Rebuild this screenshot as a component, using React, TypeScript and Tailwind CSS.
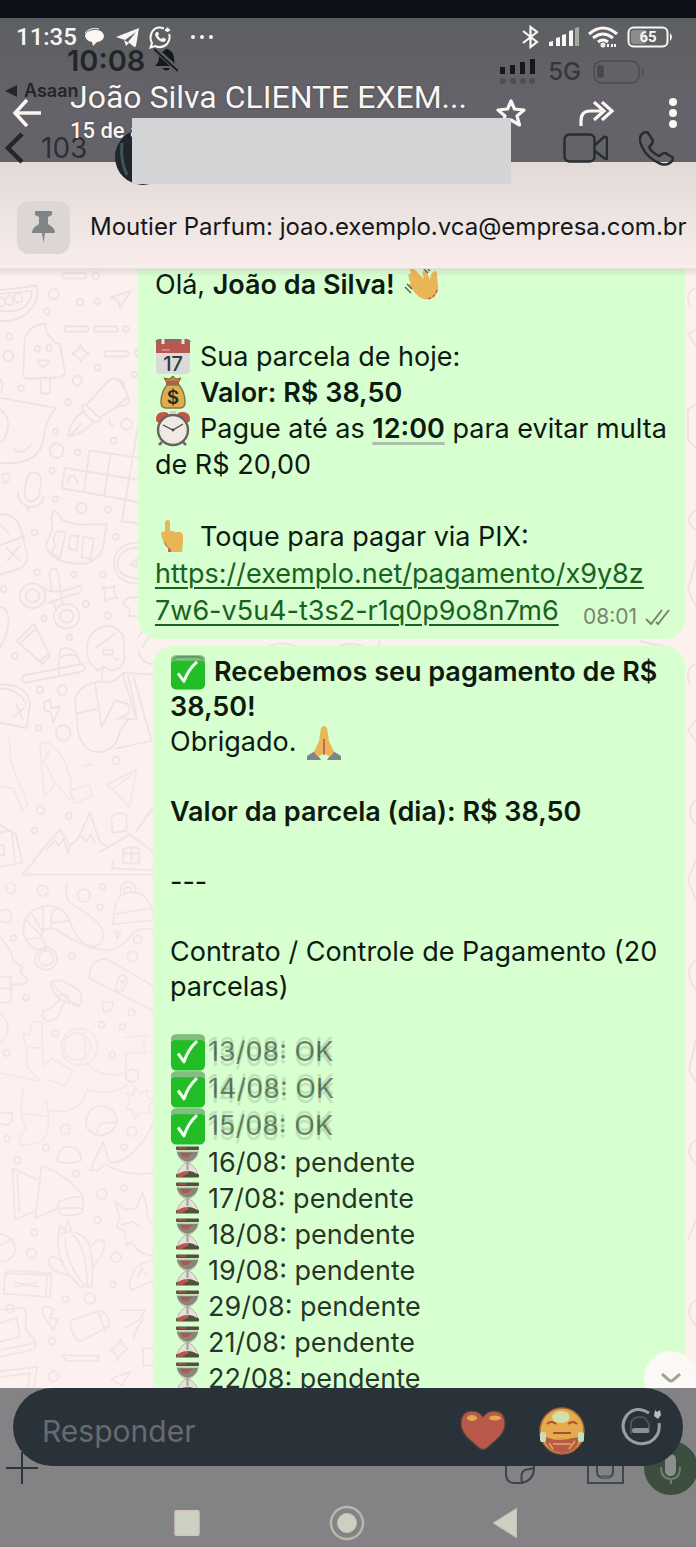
import type { ReactNode } from "react";

const circlesUpper: number[][] = [
  [161, 89, 15], [141, 134, 9], [240, 110, 10], [292, 108, 9], [28, 200, 9], [25, 250, 15],
  [378, 180, 9], [294, 281, 9], [232, 315, 14], [404, 299, 8], [63, 335, 9], [204, 371, 9],
  [380, 429, 16], [341, 472, 9], [167, 447, 8], [170, 498, 21], [233, 503, 9], [157, 550, 8],
  [167, 624, 8], [245, 648, 15], [324, 652, 9], [103, 712, 9], [347, 723, 9], [111, 816, 9],
  [222, 822, 8], [309, 821, 9], [11, 859, 9], [258, 898, 9], [323, 928, 10], [132, 936, 8],
  [209, 985, 8], [44, 1034, 9], [120, 1122, 10], [187, 1123, 14], [116, 1222, 8], [190, 1235, 22],
  [348, 1307, 11], [207, 1451, 9], [103, 1490, 8], [122, 1436, 12], [287, 41, 10],
];

const circlesLower: number[][] = [
  [32, 83, 15], [128, 91, 16], [252, 105, 19], [307, 79, 9], [300, 140, 9], [15, 166, 20],
  [41, 231, 8], [216, 283, 9], [398, 286, 15], [413, 235, 12], [78, 407, 9], [395, 451, 10],
  [305, 487, 9], [368, 494, 9], [166, 513, 9], [19, 571, 9], [337, 577, 9], [397, 638, 19],
  [196, 797, 15], [396, 803, 14], [22, 824, 9], [138, 851, 9], [372, 850, 9], [53, 888, 10],
  [229, 928, 9], [305, 988, 15], [373, 970, 9], [293, 1065, 10], [103, 1102, 9], [94, 1163, 14],
  [348, 1175, 15], [339, 1256, 9], [197, 1299, 9], [270, 1298, 16], [30, 1327, 12], [155, 1424, 10],
  [161, 1527, 15],
];

function Wallpaper() {
  return (
    <svg
      className="absolute inset-0 h-full w-full"
      viewBox="0 269 696 1119"
      preserveAspectRatio="xMinYMin slice"
      fill="none"
      stroke="#efe3e1"
      strokeWidth="5"
      strokeLinecap="round"
      strokeLinejoin="round"
      aria-hidden="true"
    >
      <g transform="translate(0 260) scale(.333 .383)">
        {circlesUpper.map(([x, y, r]) => (
          <ellipse key={`${x}-${y}`} cx={x} cy={y} rx={r} ry={r * 0.9} />
        ))}
        <path d="M0 78Q60 74 110 66Q120 110 80 140Q45 164 0 159M0 88Q50 86 96 80Q94 120 50 132Q20 136 0 131" />
        <circle cx="3" cy="110" r="12" /><circle cx="28" cy="106" r="12" /><circle cx="55" cy="99" r="12" />
        <path d="M332 98L394 80L360 125L354 104Z" />
        <rect x="187" y="34" width="72" height="14" rx="7" /><rect x="194" y="173" width="72" height="14" rx="7" />
        <rect x="282" y="173" width="72" height="14" rx="7" /><rect x="314" y="238" width="72" height="14" rx="7" />
        <path d="M70 300L74 205Q90 168 135 167L141 192L165 215L180 220L195 290Q197 304 178 306L85 310Q70 310 70 300ZM122 312V345Q135 354 150 345V310M114 262H148Q140 282 126 278Q118 274 114 262Z" />
        <circle cx="112" cy="232" r="8" /><circle cx="148" cy="230" r="8" />
        <path d="M216 245Q236 238 242 221Q248 240 268 244Q248 250 242 266Q236 250 216 245ZM415 230L402 243L415 255" />
        <path d="M258 380L325 315Q345 302 370 320L388 365Q388 385 358 380L302 410M248 380Q254 374 262 382L300 413Q300 425 282 422Q258 410 248 388ZM250 395Q210 420 204 460Q250 455 280 424M210 458L245 428M358 315L378 340M355 378L382 360M330 415Q324 430 340 434" />
        <path d="M0 360L168 386Q135 420 130 470Q120 530 20 531L0 529M0 390Q30 410 24 440Q15 475 0 475M42 494Q65 512 92 484M0 310L8 325L4 345" />
        <path d="M268 497L415 516M194 543L415 574M186 596L415 632M268 497L252 606M332 506L313 616M194 543L186 596M415 430L366 682L415 688M204 580Q202 563 222 562L234 583" />
        <path d="M78 580Q80 555 102 554Q127 556 122 586L118 612Q112 630 92 630Q70 626 74 604ZM53 604Q55 640 92 645Q125 645 131 618M84 644L86 656M5 560L25 556Q38 575 12 583Z" />
        <path d="M160 654Q175 656 185 678Q230 695 282 690L320 690L310 750Q290 795 235 793Q150 790 138 745L158 700Q150 675 160 654ZM170 708L198 711L180 778L155 765L166 745L160 730ZM212 720H235L230 760L206 752ZM250 722L282 729L272 780L245 776Z" />
        <path d="M0 664Q50 660 65 710L82 770Q84 800 50 808L0 822M0 745L72 722M0 690L28 715M20 752L60 785M58 748L22 785M415 738Q350 740 342 785Q338 840 415 846M415 750Q360 755 352 790Q352 828 415 832M390 795L410 780V802Z" />
        <ellipse cx="98" cy="877" rx="38" ry="32" /><ellipse cx="98" cy="877" rx="20" ry="17" />
        <ellipse cx="200" cy="930" rx="38" ry="32" /><ellipse cx="200" cy="930" rx="21" ry="17" />
        <path d="M148 815Q162 795 174 815L188 898M130 856Q160 878 240 850Q256 856 240 868L145 895M160 895L170 915M148 815L155 862" />
        <path d="M305 850Q325 864 345 850Q337 868 353 884Q333 878 315 892Q320 870 305 850ZM415 880L385 882Q370 892 370 900L390 910L388 930L415 930" />
        <path d="M50 995L102 950L150 1034L128 1055ZM60 1000L108 962M122 1045L148 1026M0 905Q30 910 25 950Q20 990 0 1010" />
        <path d="M70 1085L250 1054Q262 1068 245 1075L75 1104Q60 1098 70 1085ZM175 1065L180 1020Q190 1006 225 1022L240 1050M180 1040Q205 1022 236 1036M178 1084L176 1065" />
        <path d="M268 1050Q248 990 290 965Q335 940 370 980L374 1040Q370 1070 330 1072L310 1060L305 1100Q230 1110 225 1150L235 1235Q255 1290 300 1284Q350 1280 360 1230L385 1200M268 1050L292 1072L308 1062M290 1010Q320 995 345 975M310 1018H338V1030H310ZM345 1040L355 1045M305 1100Q340 1110 368 1080L410 1200L358 1196M285 1104L305 1220L345 1150L378 1158Q395 1160 385 1185L350 1200M230 1184L290 1172M400 1085L455 1255L350 1275M368 1078L460 1082M385 1085L412 1200" />
        <path d="M415 985Q430 960 460 960M416 1020Q425 1058 470 1055M430 1010Q440 980 470 985M0 1108Q85 1108 90 1160L80 1222L0 1208M0 1118Q60 1120 78 1160M38 1195L72 1170M50 1160L68 1200M132 1155L150 1148L154 1170L180 1165L160 1206L152 1180L134 1176Z" />
        <g opacity=".6">
          <path d="M28 1248L32 1310L55 1360L85 1420L68 1438L40 1380L0 1375M120 1260L132 1396Q150 1395 165 1365L210 1410Q225 1350 180 1290L145 1260ZM150 1280L132 1310L165 1365M210 1385L268 1370L276 1400L225 1418ZM320 1370L410 1330L388 1430L360 1400ZM255 1320L275 1318M340 1380L395 1345" />
        </g>
        <path d="M100 1568L180 1486L210 1530L235 1510L270 1444L300 1520L320 1530M140 1540L165 1515L175 1530L190 1512L205 1550L210 1530M245 1505L260 1518L272 1500L285 1520M300 1545L390 1500L460 1545M370 1568V1540Q395 1525 418 1540V1568M395 1535V1568M372 1550H416M335 1465L338 1495L380 1490V1450Q355 1435 335 1455M410 1490L460 1430M0 1475L48 1500L65 1568M0 1495L35 1490L45 1568M0 1528H12V1555H0" />
      </g>
      <g transform="translate(0 860) scale(.333 .338)" opacity=".8">
        {circlesLower.map(([x, y, r]) => (
          <circle key={`${x}-${y}`} cx={x} cy={y} r={r} />
        ))}
        <path d="M68 43H460M68 43L105 0M340 0L335 25L460 30M370 0V10H418V0M0 20L68 8L66 0" />
        <path d="M200 72Q195 120 215 130Q310 185 312 220Q305 265 260 252Q230 238 205 170Q180 130 130 137Q70 150 70 210Q80 265 130 268L140 260L125 230Q120 195 170 205Q260 270 330 266Q370 258 400 215Q420 198 460 205M95 160L128 210M130 138V205M205 180L155 186V205M75 175L120 220M78 235L125 230M155 186Q148 150 175 142" />
        <circle cx="138" cy="292" r="33" /><circle cx="138" cy="290" r="22" />
        <path d="M340 190Q340 130 362 105Q400 85 432 105Q455 130 460 160M340 160L460 143M338 190L460 178M362 100Q360 66 385 64Q410 68 408 98M372 98Q372 78 385 78Q396 78 396 96" />
        <path d="M268 350Q268 295 318 292L460 372M268 350L460 445M358 345Q370 335 380 350Q385 365 368 388Q350 392 346 375ZM362 360L372 356L362 378" />
        <path d="M152 360Q190 345 240 390Q252 420 235 434L210 424L180 412Q155 390 152 360ZM158 365Q185 405 235 430M180 410Q170 430 130 448Q120 465 140 475Q170 480 178 450L195 420M175 405Q200 380 208 425M306 418L340 422Q342 445 312 452Z" />
        <path d="M0 228Q35 260 38 295L68 318L60 330L84 355Q75 372 35 368L32 422H0M0 345H32V380H0M0 455Q28 470 22 510Q15 535 0 538M345 210L362 214L352 230Z" />
        <g opacity=".65">
          <path d="M68 510L90 518L95 480H126V530L130 600M68 510L80 560V610L120 655L0 630M80 556H130M132 610L155 585L218 625L195 668L145 650M260 600Q300 650 380 630M68 675L62 750L78 795Q50 830 60 842Q140 848 145 790V740L138 710M68 750L142 758M145 740Q240 760 262 680Q340 700 380 665M375 525L442 518L430 545L440 570L378 570V650M378 690L400 695L405 672L420 690L445 680L440 700L460 710L445 730L450 750L420 745L405 768L400 742L380 735L392 715Z" />
          <circle cx="238" cy="552" r="54" /><circle cx="232" cy="552" r="40" /><path d="M255 520V585" />
        </g>
        <path d="M258 780Q262 725 310 728Q350 735 350 775Q340 812 300 815Q262 810 258 780ZM350 775L300 780L290 812M170 890Q178 860 195 848L225 850Q250 875 242 890Q210 905 170 890ZM270 918L310 835L328 895Q400 900 460 780M270 918H295L315 900Q390 940 460 925M0 748H35Q42 775 20 785L0 780" />
        <path d="M38 912L112 945M38 912L45 1065L100 1040M52 930L58 1040M125 905L105 1060L175 1030M125 905Q200 930 250 995L248 1040Q240 1055 185 1050Q165 1035 178 1010Q230 990 250 1000M180 1030H248" />
        <path d="M345 1010L375 1035L410 1030L428 985Q442 1020 445 1060L460 1080M345 1010L360 1060L350 1085L375 1100L380 1140L395 1130Q420 1170 460 1170M365 1080L400 1070L420 1085" />
        <path d="M175 1110Q168 1170 205 1225L240 1262H275Q285 1190 265 1130Q240 1095 200 1100ZM195 1120Q200 1200 255 1260M220 1110Q260 1150 262 1260M175 1105L180 1080L195 1095L205 1065L215 1100M276 1140Q300 1110 314 1135Q315 1160 282 1200M190 1190Q150 1160 146 1185Q150 1220 208 1228" />
        <path d="M15 1222L155 1228L150 1293L12 1283ZM20 1214L155 1222M142 1230L138 1292M45 1250L110 1262M45 1262L110 1250M0 1105Q50 1120 45 1160Q30 1190 0 1187M0 1140L40 1120M388 1260Q395 1190 460 1185M388 1260L395 1272L460 1245M415 1235L425 1205L440 1230" />
        <path d="M126 1330Q140 1312 160 1330L150 1355L174 1358L160 1390L128 1345ZM212 1362L295 1335Q325 1330 328 1380L240 1424Q225 1420 212 1380ZM295 1338Q305 1370 318 1395M0 1330L70 1325Q85 1345 75 1385L104 1420Q112 1445 95 1450L0 1470M0 1450L100 1430M0 1370L50 1355L60 1410L0 1425M365 1332H435L420 1360L375 1385M400 1415L412 1385L430 1360" />
        <path d="M188 1468Q195 1462 205 1466L295 1466V1482H200ZM332 1448Q355 1440 362 1416Q366 1440 384 1446Q362 1458 352 1482Q350 1458 332 1448ZM0 1512L112 1500L100 1568M0 1530L90 1518L80 1568M332 1535L390 1515L365 1555ZM425 1445H460M430 1450V1495H460" />
      </g>
      <path d="M696 288Q684 292 690 306M696 330L688 334L696 346M696 404L688 410V440L696 448M696 510Q682 520 696 530M696 560L688 590L696 606M696 664Q684 668 690 684M696 720L688 730L696 742M696 800Q684 812 696 824M696 860L688 880L696 900M696 960Q682 970 696 990M696 1040L689 1070L696 1082M696 1140Q682 1150 696 1164M696 1220L688 1240M696 1300Q682 1310 696 1326M340 646Q350 642 362 646M270 646Q280 641 296 646M380 641L378 648M640 641Q652 645 664 646" strokeWidth="2" />
    </svg>
  );
}

function Wave() {
  return (
    <svg className="size-9 shrink-0" viewBox="0 0 36 36" aria-hidden="true">
      <path d="M5 11Q3 7 7 6L6 3Q9 0 12 4L20 12L18 5Q22 2 24 8L26 13Q26 6 31 4Q34 5 33 10L34 19Q35 26 29 31Q20 35 13 28L6 20Q4 17 7 16L5 13Z" fill="#e8b656" />
      <path d="M33 23Q31 30 24 32" stroke="#c1584a" strokeWidth="1.4" fill="none" strokeDasharray="3 2" />
      <path d="M18 0L24 6M22 0L26 4M1 20L7 26M3 17L8 22" stroke="#4e5b47" strokeWidth="1.4" />
    </svg>
  );
}

function CalendarEmoji() {
  return (
    <svg className="size-9 shrink-0" viewBox="0 0 36 36" aria-hidden="true">
      <path d="M1 4Q1 1 4 1H32Q35 1 35 4V31Q35 35 31 35H5Q1 35 1 31Z" fill="#dcd9d9" />
      <path d="M1 4Q1 1 4 1H32Q35 1 35 4V14H1Z" fill="#b9584d" />
      <path d="M1 3Q2 1 4 1H32Q34 1 35 3" stroke="#77726b" strokeWidth="2" fill="none" />
      <path d="M8 0V5M28 0V5" stroke="#e9e5df" strokeWidth="3" />
      <path d="M7 11H15" stroke="#df9a8f" strokeWidth="1.5" />
      <text x="18" y="32" textAnchor="middle" fontFamily="Inter, sans-serif" fontWeight="500" fontSize="20" fill="#2e3a44">17</text>
    </svg>
  );
}

function MoneyBag() {
  return (
    <svg className="size-9 shrink-0" viewBox="0 0 36 36" aria-hidden="true">
      <path d="M12 8L9 3L14 4L18 1L21 4L26 3L23 8Z" fill="#b08a44" stroke="#7d6237" />
      <path d="M11 6H24V10H11Z" fill="#b9584d" />
      <path d="M12 10H24Q30 17 30 27Q30 33 25 33H11Q6 33 6 27Q6 17 12 10Z" fill="#e0ac4e" stroke="#82784a" strokeWidth="1.5" />
      <text x="18" y="29" textAnchor="middle" fontFamily="Inter, sans-serif" fontWeight="600" fontSize="19" fill="#20301f">$</text>
    </svg>
  );
}

function AlarmClock() {
  return (
    <svg className="size-9 shrink-0" viewBox="0 0 36 36" aria-hidden="true">
      <path d="M7 31L4 34M28 31L31 34" stroke="#6d675f" strokeWidth="2.5" />
      <path d="M1 10Q0 1 9 1Q13 1 14 4L4 12ZM35 10Q36 1 27 1Q23 1 22 4L32 12Z" fill="#c0554a" />
      <path d="M15 2Q18 -1 21 2" stroke="#cfcac4" strokeWidth="2" fill="none" />
      <circle cx="18" cy="19" r="15" fill="#f1e9e4" stroke="#68625e" strokeWidth="2.4" />
      <circle cx="18" cy="19" r="12" fill="none" stroke="#d8cfca" strokeWidth="1" strokeDasharray="1 5" />
      <path d="M8 14L18 19L28 13" stroke="#454541" strokeWidth="1.3" fill="none" />
      <circle cx="18" cy="19" r="1.4" fill="#454541" />
    </svg>
  );
}

function PointUp() {
  return (
    <svg className="size-9 shrink-0" viewBox="0 0 36 36" aria-hidden="true">
      <path d="M10 4Q10 1 13 1Q15 1 15 4V12H19V13L25 13Q28 14 28 17V23L27 33H13V29L9 25L6 15Q6 13 8 12L10 13Z" fill="#e8b656" />
      <path d="M10 22Q12 29 16 30V33H13V29Q9 26 10 22Z" fill="#c1704f" />
    </svg>
  );
}

function Pray() {
  return (
    <svg className="size-9 shrink-0" viewBox="0 0 36 36" aria-hidden="true">
      <path d="M1 31L9 26L15 35H1ZM35 31L27 26L21 35H35Z" fill="#7f8588" />
      <path d="M15 3Q18 -1 21 3L23 16L28 27L24 32L18 28L12 32L8 27L13 16Z" fill="#e8b656" />
      <path d="M18 14V30" stroke="#b9584d" strokeWidth="1.6" />
    </svg>
  );
}

function CheckBoxEmoji({ tall = false }: { tall?: boolean }) {
  return (
    <svg
      className={tall ? "h-[37px] w-[35px] shrink-0" : "h-[35px] w-[35px] shrink-0"}
      viewBox="0 0 35 36"
      preserveAspectRatio="none"
      aria-hidden="true"
    >
      <rect x="1" y="0.5" width="34" height="35" rx="5" fill="#22bd27" />
      <path d="M1 8V5Q1 .5 6 .5H30Q35 .5 35 5V8Q32 5 28 6H8Q4 5 1 8Z" fill="#84bd84" />
      {!tall && <path d="M3 5Q5 2 8 2H28Q32 2 33 5" stroke="#3f7d45" fill="none" />}
      <path d="M8 19L14 27Q18 15 27 7" stroke="#effff0" strokeWidth="3" fill="none" strokeLinejoin="round" />
    </svg>
  );
}

function Hourglass() {
  return (
    <svg className="h-9 w-[35px] shrink-0" viewBox="0 0 35 36" aria-hidden="true">
      <path d="M7 6H28Q27 15 18.500 18Q26 21 28 30H7Q9 21 16.500 18Q8 15 7 6Z" fill="#e6e0da" stroke="#a9a79b" strokeWidth=".8" />
      <path d="M7 7H28Q26 15 17.500 17Q9 15 7 7Z" fill="#85877a" />
      <path d="M10 8H22L18 12H13Z" fill="#b0564a" />
      <path d="M16.500 16H18.500V25H16.500Z" fill="#a5a295" />
      <path d="M7 30Q11 26 17.500 26V31H7Z" fill="#bd574b" />
      <path d="M17.500 26Q24 26 28 30V31H17.500Z" fill="#4f5640" />
      <rect x="6" y="1.500" width="23" height="3.500" rx="1" fill="#4f513d" />
      <path d="M8 2H16V4H8Z" fill="#a04d42" />
      <rect x="6" y="29" width="23" height="3.500" rx="1" fill="#4f513d" />
      <path d="M7 29H17L12 32H7Z" fill="#b5544a" />
    </svg>
  );
}

function Line({ children }: { children?: ReactNode }) {
  return <p className="flex h-9 items-center gap-[9px] whitespace-pre">{children}</p>;
}

function Line2({ children }: { children?: ReactNode }) {
  return <p className="flex h-[35px] items-center gap-[9px] whitespace-pre">{children}</p>;
}

const paid = ["13/08: OK", "14/08: OK", "15/08: OK"];
const pending = ["16/08", "17/08", "18/08", "19/08", "29/08", "21/08", "22/08"];

function ViewerHeader() {
  return (
    <header className="relative z-10 bg-linear-to-b from-[#5c5f61] to-[#65636a] to-60% pb-[15px]">
      <div className="absolute inset-0 font-['Inter',sans-serif] text-[#22262a]" aria-hidden="true">
        <div className="flex h-[84px] items-center justify-between pr-[51px] pl-[67px]">
          <span className="flex items-center gap-[9px] text-[29px] leading-none font-semibold">
            10:08
            <svg className="size-6" viewBox="0 0 24 24">
              <path d="M1 18Q5 15 5 9Q6 4 10 3Q12 -1 15 2Q20 4 20 11Q20 15 22 18Z" fill="#15191e" />
              <path d="M8 20H16Q13 25 8 20Z" fill="#15191e" />
              <path d="M1 1L24 22" stroke="#636367" strokeWidth="5" />
              <path d="M0 1L24 23" stroke="#15191e" strokeWidth="1.800" />
            </svg>
          </span>
          <span className="mt-6 flex items-center gap-[12px] text-[24px] leading-none font-medium text-[#34373b]">
            <svg className="h-[26px] w-[37px]" viewBox="0 0 37 26">
              <path d="M1 8H6V15H1ZM11 6H16V15H11ZM21 3H26V15H21ZM31 0H36V15H31Z" fill="#15191e" />
              <g fill="#505054"><circle cx="4" cy="22" r="3" /><circle cx="14" cy="22" r="3" /><circle cx="24" cy="22" r="3" /><circle cx="33" cy="22" r="3" /></g>
            </svg>
            5G
            <svg className="h-6 w-[52px]" viewBox="0 0 52 24">
              <rect x="1" y="1" width="45" height="22" rx="8" fill="none" stroke="#4a4c4c" strokeWidth="1.500" />
              <rect x="4" y="5" width="7" height="13" rx="3" fill="#45484f" />
              <path d="M49 8Q53 12 49 16Z" fill="#4a4c4c" />
            </svg>
          </span>
        </div>
        <div className="-mt-[21px] flex h-5 items-center gap-[7px] pl-[5px] text-[18px] leading-none font-semibold">
          <svg className="h-3 w-3" viewBox="0 0 12 12"><path d="M0 6L12 0V12Z" fill="#22262a" /></svg>
          Asaan
        </div>
        <div className="mt-7 flex h-[38px] items-center pr-[22px] pl-[5px] text-[28px] leading-none text-[#2c3032]">
          <svg className="h-8 w-5 shrink-0" viewBox="0 0 20 32"><path d="M17 2L3 16L17 30" stroke="#22282a" strokeWidth="4.500" fill="none" /></svg>
          <span className="ml-4">103</span>
          <svg className="ml-7 size-14 self-start" viewBox="0 0 56 56">
            <circle cx="28" cy="28" r="28" fill="#20262b" />
            <path d="M7 14Q5 32 12 46" stroke="#42535c" strokeWidth="3" fill="none" />
          </svg>
          <svg className="ml-auto h-[30px] w-[45px]" viewBox="0 0 45 30" fill="none" stroke="#282d2e" strokeWidth="2.500" strokeLinejoin="round">
            <rect x="1.500" y="1.500" width="30" height="27" rx="5" /><path d="M32 12L41 4Q44 3 44 6V25Q44 27 41 25L32 18" />
          </svg>
          <svg className="ml-[31px] size-[35px]" viewBox="0 0 35 35" fill="none" stroke="#282d2e" strokeWidth="2.500" strokeLinejoin="round">
            <path d="M4 2Q7 0 9 2L13 8Q15 11 12 14L10 16Q13 22 20 25L23 23Q26 21 28 23L33 26Q35 28 33 30Q29 35 22 33Q5 26 1 10Q0 5 4 2Z" />
          </svg>
        </div>
      </div>

      <div className="relative flex h-[38px] items-center pr-[23px] pl-4 text-[#fbf5f3]">
        <span className="text-[24px] leading-none font-medium">11:35</span>
        <svg className="ml-2 h-[19px] w-[19px]" viewBox="0 0 19 19" fill="#fbf5f3">
          <path d="M9 2Q18 1 19 8Q19 13 12 14L8 18L7 14Q1 13 0 8Q0 3 9 2Z" /><path d="M0 5Q5 -1 14 1" stroke="#fbf5f3" fill="none" />
        </svg>
        <svg className="ml-3 h-[19px] w-[23px]" viewBox="0 0 23 19" fill="#fbf5f3">
          <path d="M0 9L23 0L20 18Q19 20 17 18L12 14L20 4L9 12Z" /><path d="M8 12L10 18L13 15Z" />
        </svg>
        <svg className="ml-[10px] size-[23px]" viewBox="0 0 23 23" fill="none" stroke="#fbf5f3" strokeWidth="2">
          <path d="M15 2.500Q7 -.5 3 6Q0 12 3 17L1.500 21.500L6 20Q13 23 18 18Q22 13 20 8" />
          <path d="M7.500 6Q5 8 7 11Q10 16 15 16Q17 15 17 13L14 11.500L12.500 13Q10 12 9 9.500L10 8L9 6Z" fill="#fbf5f3" stroke="none" />
          <path d="M18.500 1.500V6M16 4H21" />
        </svg>
        <svg className="ml-[18px] h-1 w-6" viewBox="0 0 24 4" fill="#fbf5f3"><circle cx="3" cy="2" r="2" /><circle cx="12" cy="2" r="2" /><circle cx="21" cy="2" r="2" /></svg>
        <svg className="ml-auto h-6 w-[17px]" viewBox="0 0 17 24" fill="none" stroke="#fbf5f3" strokeWidth="2.200">
          <path d="M1 6L15 17L8.500 22V2L15 7L1 18" />
        </svg>
        <svg className="ml-[10px] h-5 w-[31px]" viewBox="0 0 31 20">
          <path d="M0 15L4 14V19H0ZM7 11L11 10V19H7ZM13 8L17 7V19H13ZM20 4L24 3V19H20Z" fill="#fbf5f3" /><path d="M26 1L30 0V19H26Z" fill="#a5aba0" />
        </svg>
        <svg className="ml-2 h-[22px] w-[30px]" viewBox="0 0 30 22" fill="none" stroke="#fbf5f3" strokeWidth="3">
          <path d="M1 8Q15 -4 29 8M5 12Q15 4 25 12M10 16Q15 12 20 16" /><circle cx="15" cy="19" r="1" /><path d="M20 18V21M24 18V21M27 18V21" strokeWidth="2" />
        </svg>
        <svg className="ml-[9px] h-[22px] w-[46px]" viewBox="0 0 46 22">
          <rect x="4" y="4" width="15" height="14" rx="2" fill="#8b8b8d" />
          <rect x="1.500" y="1.500" width="39" height="19" rx="5" fill="none" stroke="#fbf5f3" strokeWidth="2" />
          <path d="M43 7Q47 11 43 15Z" fill="#fbf5f3" />
          <text x="21" y="16" textAnchor="middle" fontFamily="Roboto, sans-serif" fontWeight="700" fontSize="15" fill="#fbf5f3">65</text>
        </svg>
      </div>

      <div className="relative mt-[23px] flex h-[68px] items-center pr-4 pl-3 text-[#fbf5f3]">
        <button type="button" aria-label="Voltar" className="shrink-0">
          <svg className="h-[30px] w-[30px]" viewBox="0 0 30 30" fill="none" stroke="#fbf5f3" strokeWidth="3.500"><path d="M15 2L3 15L15 28M2 15H29" /></svg>
        </button>
        <div className="ml-7 min-w-0 flex-1">
          <h1 className="h-9 whitespace-nowrap text-[32px] leading-9 [text-shadow:0_0_2px_#3a3a3e]">João Silva CLIENTE EXEM...</h1>
          <p className="h-8 text-[22px] leading-8 font-medium [text-shadow:0_0_2px_#3a3a3e]">15 de agosto</p>
        </div>
        <button type="button" aria-label="Favoritar" className="shrink-0">
          <svg className="h-[30px] w-8" viewBox="0 0 32 30" fill="none" stroke="#fbf5f3" strokeWidth="3.200" strokeLinejoin="round">
            <path d="M16 3L19.500 11L29 12L22 18L24.500 27L16 22L7.500 27L10 18L3 12L12.500 11Z" />
          </svg>
        </button>
        <button type="button" aria-label="Encaminhar" className="ml-[51px] shrink-0">
          <svg className="h-[25px] w-[37px]" viewBox="0 0 37 25" fill="none" stroke="#fbf5f3" strokeWidth="3.200">
            <path d="M3 25V20Q3 10 12 10H23M16 1L26 10L16 19M24 1L34 10L24 19" />
          </svg>
        </button>
        <button type="button" aria-label="Mais opções" className="ml-[51px] shrink-0">
          <svg className="h-[30px] w-[14px]" viewBox="0 0 14 30" fill="#fbf5f3"><circle cx="7" cy="4" r="4" /><circle cx="7" cy="15" r="4" /><circle cx="7" cy="26" r="4" /></svg>
        </button>
      </div>
      <div className="absolute top-[100px] right-[185px] left-[132px] h-[66px] bg-[#d2d4d5]" />
    </header>
  );
}

function Messages() {
  return (
    <main className="relative min-h-0 flex-1 overflow-hidden bg-[#fcf1ee] text-[27px] text-[#0e1a10] [font-family:Inter,sans-serif]">
      <Wallpaper />
      <div className="relative flex flex-col gap-[7px] pr-[11px]">
        <article className="ml-[138px] rounded-b-[20px] bg-[#d7ffd0] pb-[10px] pl-[17px]">
          <div className="-mt-[2px]">
            <Line><span>Olá, <b className="font-semibold">João da Silva!</b></span><Wave /></Line>
            <Line />
            <Line><CalendarEmoji /><span>Sua parcela de hoje:</span></Line>
            <Line><MoneyBag /><b className="font-semibold">Valor: R$ 38,50</b></Line>
            <Line><AlarmClock /><span>Pague até as <b className="font-semibold underline decoration-[#aebfaa] decoration-3 underline-offset-4">12:00</b> para evitar multa</span></Line>
            <Line>de R$ 20,00</Line>
            <Line />
            <Line><PointUp /><span>Toque para pagar via PIX:</span></Line>
            <div className="flex items-end justify-between pr-[15px]">
              <a href="https://exemplo.net/pagamento/x9y8z7w6-v5u4-t3s2-r1q0p9o8n7m6" className="leading-[37px] whitespace-nowrap text-[#17621f] underline decoration-2 underline-offset-4">
                https://exemplo.net/pagamento/x9y8z<br />7w6-v5u4-t3s2-r1q0p9o8n7m6
              </a>
              <span className="-ml-[80px] flex shrink-0 items-center gap-2 text-[21px] leading-6 text-[#78866f]">
                08:01
                <svg className="h-[17px] w-[25px]" viewBox="0 0 25 17" fill="none" stroke="#78866f" strokeWidth="2"><path d="M1 10L6 15L17 1M11 13L13 15L24 1" /></svg>
              </span>
            </div>
          </div>
        </article>

        <article className="ml-[153px] rounded-[20px] bg-[#d7ffd0] pt-[9px] pb-5 pl-[17px]">
          <Line2><CheckBoxEmoji /><b className="font-semibold">Recebemos seu pagamento de R$</b></Line2>
          <Line2><b className="font-semibold">38,50!</b></Line2>
          <Line2><span>Obrigado.</span><Pray /></Line2>
          <Line2 />
          <Line2><b className="font-semibold">Valor da parcela (dia): R$ 38,50</b></Line2>
          <Line2 />
          <Line2>---</Line2>
          <Line2 />
          <Line2>Contrato / Controle de Pagamento (20</Line2>
          <Line2>parcelas)</Line2>
          <ul className="mt-[29px]">
            {paid.map((text) => (
              <li key={text} className="flex h-[37px] items-center gap-[3px]">
                <CheckBoxEmoji tall />
                <span className="text-[#0e1a10]/55 [text-shadow:0_-4px_1px_#0e1a1022,0_5px_1px_#0e1a1022]">{text}</span>
              </li>
            ))}
            {pending.map((day) => (
              <li key={day} className="flex h-9 items-center gap-[3px] text-[#0e1a10]/90">
                <Hourglass />
                <span>{day}: pendente</span>
              </li>
            ))}
          </ul>
        </article>
      </div>
      <div className="absolute inset-x-0 top-0 h-2 bg-linear-to-b from-[#8a8a80]/20 to-transparent" />
      <button type="button" aria-label="Ir para o fim" className="absolute -right-[1px] -bottom-[16px] flex size-[53px] items-center justify-center rounded-full bg-[#fcf8f5]">
        <svg className="h-[10px] w-5" viewBox="0 0 20 10" fill="none" stroke="#9da398" strokeWidth="3"><path d="M1 1L8 7Q10 9 12 7L19 1" /></svg>
      </button>
    </main>
  );
}

function ReplyFooter() {
  return (
    <footer className="relative bg-[#838385]">
      <div className="absolute inset-0" aria-hidden="true">
        <div className="flex h-[159px] items-center pl-[6px]">
          <svg className="h-8 w-8" viewBox="0 0 32 32" stroke="#2b3439" strokeWidth="2"><path d="M16 0V32M0 16H32" /></svg>
          <svg className="ml-auto h-8 w-[30px]" viewBox="0 0 30 32" fill="none" stroke="#3a434a" strokeWidth="2">
            <path d="M1 0V22Q1 31 10 31H17Q29 28 29 16V0M17 31Q15 20 20 18L29 16" />
          </svg>
          <svg className="ml-[52px] h-8 w-[37px]" viewBox="0 0 37 32" fill="none" stroke="#3f484d" strokeWidth="2">
            <path d="M1 6H36V31H1Z" /><path d="M10 12V20Q10 26 18 26Q26 26 26 20V12" /><path d="M14 25H23" strokeWidth="4" stroke="#5c6267" />
          </svg>
          <svg className="-mr-[2px] ml-5 size-[54px]" viewBox="0 0 54 54">
            <circle cx="27" cy="27" r="27" fill="#3c4e3d" />
            <rect x="21" y="13" width="11" height="22" rx="5.500" fill="#8a908c" />
            <path d="M17 26Q17 38 27 38Q36 38 36 26M27 38V43" stroke="#707c72" strokeWidth="2" fill="none" />
          </svg>
        </div>
      </div>
      <form className="relative mr-[13px] ml-[13px] flex h-[78px] items-center rounded-full bg-[#2a3239] pr-[20px] pl-[29px]" onSubmit={(e) => e.preventDefault()}>
        <input
          aria-label="Responder"
          placeholder="Responder"
          className="mt-2 min-w-0 flex-1 bg-transparent text-[30px] text-[#c8cac8] outline-none placeholder:text-[#676b70] [font-family:Inter,sans-serif]"
        />
        <button type="button" aria-label="Reagir com coração" className="mt-2">
          <svg className="h-[42px] w-[46px]" viewBox="0 0 46 42">
            <path d="M23 7Q19 1 11 1Q1 2 1 14Q1 22 10 30L19 38Q23 41 27 38L36 30Q45 22 45 14Q45 2 35 1Q27 1 23 7Z" fill="#b9594c" stroke="#55463a" strokeWidth="1.200" />
            <ellipse cx="12" cy="8" rx="5" ry="3" fill="#e3a94f" /><ellipse cx="35" cy="8" rx="6" ry="2.500" fill="#e3a94f" />
          </svg>
        </button>
        <button type="button" aria-label="Reagir com risada" className="mt-2 ml-[33px]">
          <svg className="h-12 w-[46px]" viewBox="0 0 46 48">
            <ellipse cx="23" cy="24" rx="22" ry="23" fill="#e5ab4b" stroke="#a5673d" strokeWidth="1.500" />
            <ellipse cx="22" cy="10" rx="9" ry="6" fill="#cfe0ab" />
            <path d="M5 30Q22 33 41 30Q38 46 23 46Q8 45 5 30Z" fill="#b9594c" />
            <path d="M8 17Q12 13 17 17M29 17Q34 13 38 17M14 26H32" stroke="#a5503f" strokeWidth="1.800" fill="none" />
            <path d="M9 30Q22 35 36 29M14 37H32M10 36L14 42M36 34L30 42" stroke="#e5ab4b" strokeWidth="1.500" fill="none" />
            <rect x="1" y="25" width="6" height="10" rx="2" fill="#c9dcc0" /><rect x="39" y="25" width="6" height="10" rx="2" fill="#bfe0b8" />
          </svg>
        </button>
        <button type="button" aria-label="Figurinhas" className="ml-9">
          <svg className="h-[38px] w-[42px]" viewBox="0 0 42 38" fill="none">
            <path d="M28 5Q15 -3 6 7Q-2 18 6 29Q15 39 29 34Q40 27 38 15" stroke="#9a9f9e" strokeWidth="3" />
            <path d="M10 26V14Q15 7 24 10L28 16V25" stroke="#4c5357" strokeWidth="2" />
            <rect x="11" y="20" width="17" height="5" rx="2" fill="#8c9191" />
            <path d="M34 2L36 4L39 2L40 7L37 11L33 8Z" fill="#b9bdbb" />
          </svg>
        </button>
      </form>
      <nav className="relative mt-[37px] flex h-11 items-center justify-between pr-[179px] pb-[4px] pl-[174px]">
        <button type="button" aria-label="Recentes"><svg className="size-[26px]" viewBox="0 0 26 26"><rect x="1" y="0.500" width="24" height="25" rx="2" fill="#cbd0c3" stroke="#d5c2bb" strokeWidth="1.500" /></svg></button>
        <button type="button" aria-label="Início"><svg className="size-9" viewBox="0 0 36 36"><circle cx="18" cy="18" r="16" fill="none" stroke="#b6b8ab" strokeWidth="2.500" /><circle cx="18" cy="18" r="9.500" fill="#cbd0c3" stroke="#d5c2bb" /></svg></button>
        <button type="button" aria-label="Anterior"><svg className="h-8 w-6" viewBox="0 0 24 32"><path d="M0 16L24 1V31Z" fill="#cbd0c3" stroke="#b9b7ac" /></svg></button>
      </nav>
    </footer>
  );
}

export default function App() {
  return (
    <div className="flex h-screen flex-col overflow-hidden bg-[#0d1117] pt-[18px] [font-family:Roboto,sans-serif]">
      <ViewerHeader />
      <section className="flex h-[107px] shrink-0 items-center border-b border-[#e9dfdc] bg-linear-to-b from-[#e2dad8] to-[#f8edea] pt-[24px] pl-[17px] text-[#15181a] [font-family:Inter,sans-serif]">
        <span className="flex size-[53px] shrink-0 items-center justify-center rounded-xl bg-[#dcd7d5]">
          <svg className="h-8 w-[23px]" viewBox="0 0 23 32" fill="#808486"><path d="M3 1Q3 0 4 0H19Q20 0 20 1V4L16 6V13Q22 16 23 21Q23 22 22 22H13L11.500 32L10 22H1Q0 22 0 21Q1 16 7 13V6L3 4Z" /></svg>
        </span>
        <p className="ml-5 whitespace-nowrap text-[24px]">Moutier Parfum: joao.exemplo.vca@empresa.com.br</p>
      </section>
      <Messages />
      <ReplyFooter />
    </div>
  );
}
